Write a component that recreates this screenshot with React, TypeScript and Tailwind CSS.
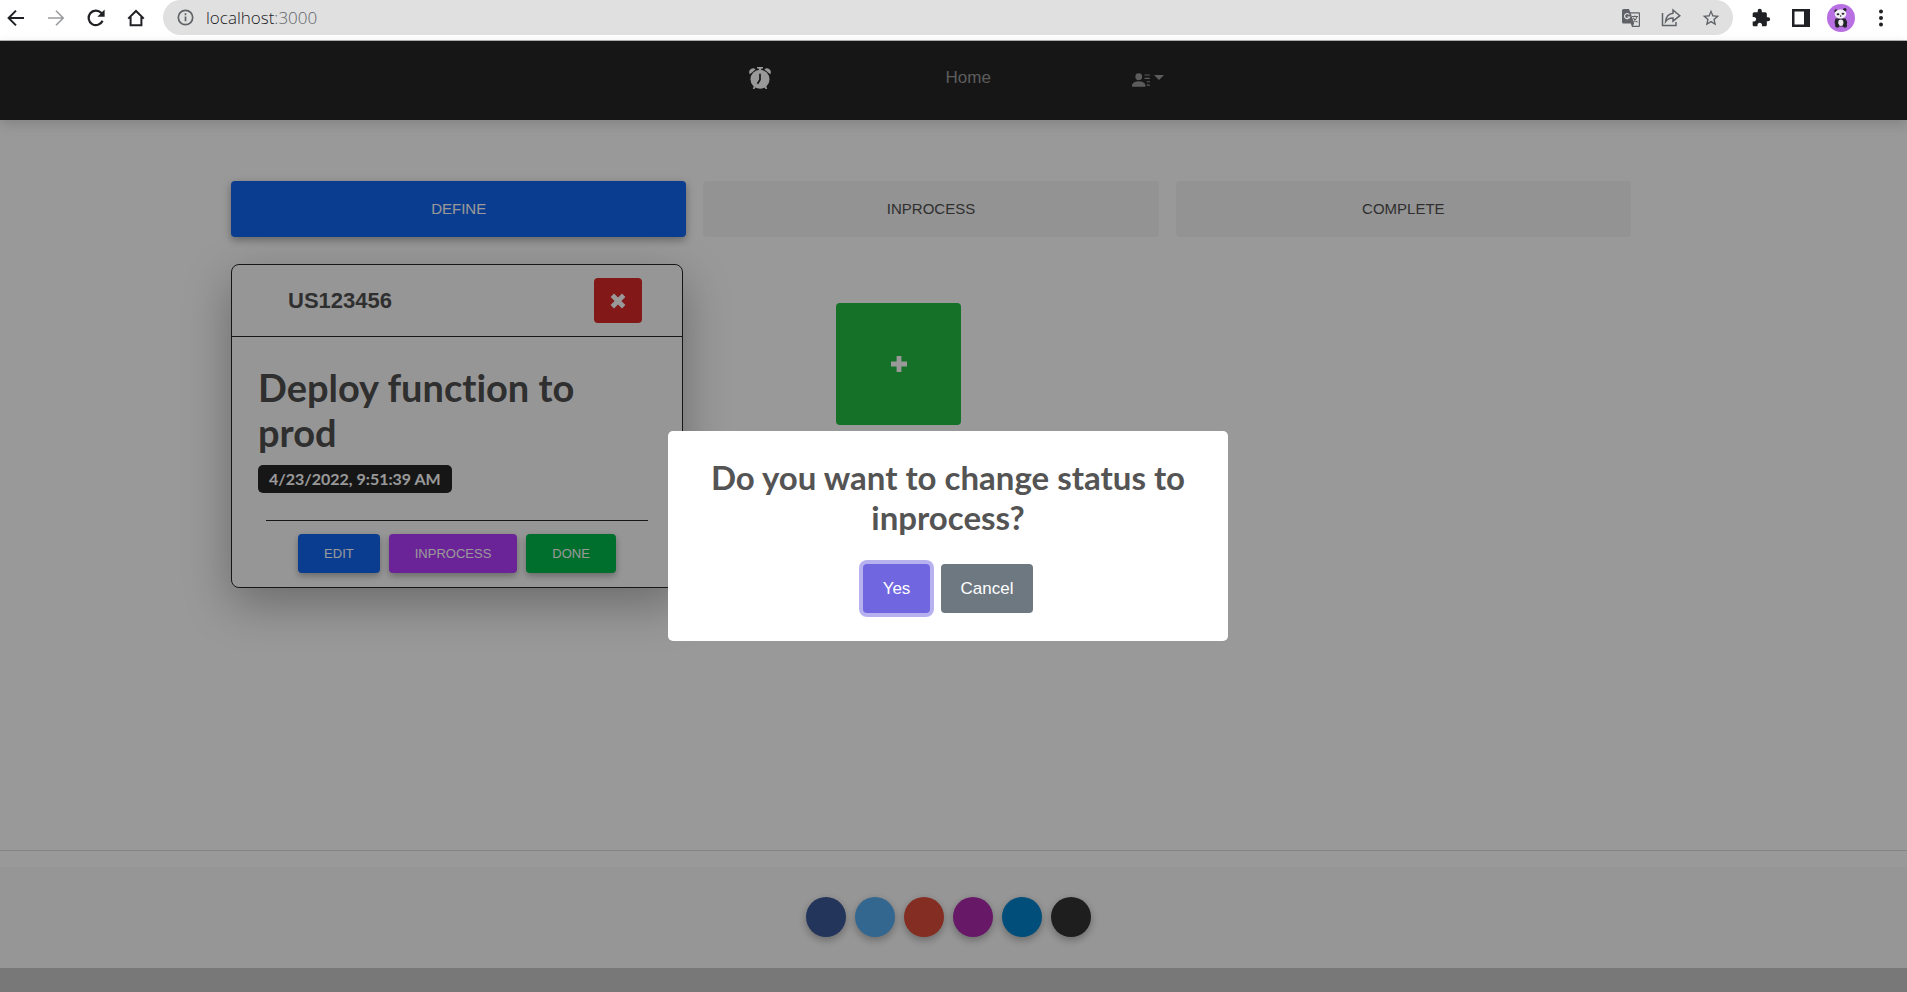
import React from "react";
import { BsPersonLinesFill } from "react-icons/bs";
import { MdExtension, MdStarBorder } from "react-icons/md";

const iconButton = "flex size-5 items-center justify-center";

function TranslateIcon() {
  return (
    <svg viewBox="0 0 20 20" className="size-5">
      <path d="M2.500 1H8l1.300 3.200H18a1 1 0 0 1 1 1V18a1 1 0 0 1-1 1h-7l-1.200-3.500H2.500A1.500 1.500 0 0 1 1 14V2.500A1.500 1.500 0 0 1 2.500 1z" fill="currentColor" />
      <path d="M9.800 5.400H17.800V17.800H12l1.200-2.300z" fill="#e0e0e0" />
      <path d="M8.300 6.600A2.600 2.600 0 1 0 8.600 9H6.300" fill="none" stroke="#e0e0e0" strokeWidth="1.200" />
      <path d="M11 8.500h6M14 7.500v1M16 8.500c-.5 2.500-2 4-3.500 5.300M12.300 9.700c.8 2 2.200 3.300 4.200 4.600" fill="none" stroke="currentColor" strokeWidth="1.100" />
    </svg>
  );
}

function PandaAvatar() {
  return (
    <svg viewBox="0 0 28 28" className="size-7">
      <circle cx="14" cy="14" r="14" fill="#b86fe2" />
      <path d="M8.500 14.500h10l1.700 3.500-.7 4.500h-11L7.500 18z" fill="#26242b" />
      <ellipse cx="13.800" cy="18.800" rx="2.600" ry="3.200" fill="#eceaee" />
      <circle cx="10.300" cy="21.800" r="2" fill="#26242b" />
      <circle cx="18" cy="21.800" r="2" fill="#26242b" />
      <circle cx="9" cy="7" r="1.700" fill="#26242b" />
      <circle cx="17.800" cy="5.800" r="1.700" fill="#26242b" />
      <ellipse cx="13.500" cy="10" rx="5.800" ry="4.500" fill="#f1f0f2" />
      <ellipse cx="11" cy="10.300" rx="1.400" ry="1" fill="#26242b" />
      <ellipse cx="16" cy="9.800" rx="1.400" ry="1" fill="#26242b" />
      <circle cx="13.600" cy="12" r=".7" fill="#26242b" />
    </svg>
  );
}

function BrowserBar() {
  return (
    <header className="flex h-[41px] items-start border-b border-[#b4b4b4] bg-white pr-4 pl-[6px] text-[#202124]">
      <div className="flex h-[35px] items-center gap-5">
        <button aria-label="Back" className={iconButton}>
          <svg viewBox="0 0 20 20" className="size-5" fill="none" stroke="currentColor" strokeWidth="2">
            <path d="M18 10H3M10 2.600 2.600 10l7.400 7.400" />
          </svg>
        </button>
        <button aria-label="Forward" className={`${iconButton} text-[#9b9c9e]`}>
          <svg viewBox="0 0 20 20" className="size-5" fill="none" stroke="currentColor" strokeWidth="1.600">
            <path d="M2 10h15M10 2.800l7.200 7.200-7.200 7.200" />
          </svg>
        </button>
        <button aria-label="Reload" className={iconButton}>
          <svg viewBox="0 0 20 20" className="size-5" fill="none" stroke="currentColor" strokeWidth="2.200">
            <path d="M16.600 12.800A7.300 7.300 0 1 1 15.200 4.800L17 6.600" />
            <path d="M18.600 1.600v7.200h-7.200z" fill="currentColor" stroke="none" />
          </svg>
        </button>
        <button aria-label="Home page" className={iconButton}>
          <svg viewBox="0 0 20 20" className="size-5" fill="none" stroke="currentColor" strokeWidth="2">
            <path d="M2.200 10.600 10 3l7.800 7.600M4.600 9v8.200h10.800V9" />
          </svg>
        </button>
      </div>
      <div className="ml-[17px] flex h-[35px] flex-1 items-center rounded-full bg-[#e0e0e0] pr-3 pl-[14px] text-[#5f6368]">
        <svg viewBox="0 0 18 18" className="size-[17px]" fill="none" stroke="currentColor" strokeWidth="1.800">
          <circle cx="9" cy="9" r="7.600" />
          <path d="M9 8v5M9 4.600v1.900" />
        </svg>
        <div role="textbox" aria-label="Address" className="ml-3 flex-1 font-['Open_Sans','Noto_Sans',sans-serif] text-[17px] leading-6 font-light">
          <span className="text-[#202124]">localhost</span>:3000
        </div>
        <div className="flex items-center gap-5">
          <button aria-label="Translate" className={iconButton}><TranslateIcon /></button>
          <button aria-label="Share" className={iconButton}>
            <svg viewBox="0 0 20 20" className="size-5" fill="none" stroke="currentColor" strokeWidth="1.500">
              <path d="M1.500 5v12.500H15V14M12 2l6.800 5.700L12 13.200V10c-3.400-.1-5.600 1-7.400 3.500C5 9.200 7.400 6 12 5.300z" />
            </svg>
          </button>
          <button aria-label="Bookmark" className={iconButton}><MdStarBorder size={22} /></button>
        </div>
      </div>
      <div className="ml-[18px] flex h-[35px] items-center gap-[14px]">
        <button aria-label="Extensions" className={iconButton}><MdExtension size={20} /></button>
        <button aria-label="Side panel" className="mr-[2px] ml-[6px] flex size-5 items-center justify-center">
          <svg viewBox="0 0 18 18" className="size-[18px]">
            <path d="M0 0h18v18H0zM2.500 2.500v13H12v-13z" fill="currentColor" fillRule="evenodd" />
          </svg>
        </button>
        <button aria-label="Profile" className="size-7"><PandaAvatar /></button>
        <button aria-label="Menu" className="ml-[2px] flex size-5 items-center justify-center">
          <svg viewBox="0 0 20 20" className="size-5" fill="currentColor">
            <circle cx="10" cy="3.500" r="2" />
            <circle cx="10" cy="10" r="2" />
            <circle cx="10" cy="16.500" r="2" />
          </svg>
        </button>
      </div>
    </header>
  );
}

function AlarmIcon() {
  return (
    <svg viewBox="0 0 22 22" className="size-[22px]">
      <g fill="currentColor">
        <path d="M8 0h6v1.200l-2 .8v1h-2V2l-2-.8zM.8 7.200A3.800 3.800 0 0 1 6.600 2.400zM21.200 7.200a3.800 3.800 0 0 0-5.800-4.800z" />
        <circle cx="11" cy="12.200" r="9.500" />
        <path d="m5 18.500 1.500 1.500-1 2H3.800zM17 18.500 15.500 20l1 2h1.700z" />
      </g>
      <path d="M11 6.800v6l-2.500 4" fill="none" stroke="#262626" strokeWidth="1.700" />
    </svg>
  );
}

function Navbar() {
  return (
    <nav className="flex h-[79px] justify-center bg-[#262626] pl-[7px] text-[#9a9a9a] shadow-[0_4px_12px_rgba(0,0,0,0.15)]">
      <div className="grid grid-cols-[197px_186px_34px] items-center pb-[6px]">
        <a href="#top" aria-label="Tasks" className="w-fit text-white"><AlarmIcon /></a>
        <a href="#home" className="text-[17px] leading-6">Home</a>
        <button aria-label="Account" className="flex items-center gap-1 pt-1">
          <BsPersonLinesFill size={18} />
          <span className="mb-1 border-x-[5px] border-t-[5px] border-x-transparent border-t-current" />
        </button>
      </div>
    </nav>
  );
}

const tabBase = "h-14 flex-1 rounded-[4px] text-[15px] leading-5 uppercase";
const actionBase = "h-[39px] rounded-[4px] px-[26px] text-[13px] leading-5 text-white uppercase shadow-[0_3px_7px_rgba(0,0,0,0.3)]";

function TaskCard() {
  return (
    <article className="w-[452px] rounded-lg border border-[#262626] bg-[#fbfbfb] text-[#4f4f4f] shadow-[0_16px_48px_rgba(0,0,0,0.3)]">
      <header className="flex h-[72px] items-center justify-between border-b border-[#262626] pr-10 pl-14">
        <h5 className="text-[22px] leading-7 font-bold">US123456</h5>
        <button aria-label="Delete task" className="flex h-[45px] w-12 items-center justify-center rounded-[4px] bg-[#db2828] text-white">
          <svg viewBox="0 0 16 16" className="size-4" fill="none" stroke="currentColor" strokeWidth="4.800">
            <path d="m2.300 2.300 11.400 11.400M13.700 2.300 2.300 13.700" />
          </svg>
        </button>
      </header>
      <div className="px-[26px] pt-7 pb-[14px]">
        <h2 className="pr-10 font-['Lato',sans-serif] text-[38px] leading-[45px] font-bold [font-variant-ligatures:none]">Deploy function to prod</h2>
        <time className="mt-[10px] flex h-7 w-fit items-center rounded-[5px] bg-[#262626] px-[11px] font-['Lato',sans-serif] text-[16px] leading-5 font-bold text-white">
          4/23/2022, 9:51:39 AM
        </time>
        <hr className="mx-2 mt-[27px] border-[#262626]" />
        <div className="mt-[13px] flex justify-center gap-[9px]">
          <button className={`${actionBase} bg-[#1266f1]`}>Edit</button>
          <button className={`${actionBase} bg-[#b23cfd]`}>Inprocess</button>
          <button className={`${actionBase} bg-[#00b74a]`}>Done</button>
        </div>
      </div>
    </article>
  );
}

const socials = [
  { name: "Facebook", color: "bg-[#3b5998]" },
  { name: "Twitter", color: "bg-[#55acee]" },
  { name: "Google", color: "bg-[#dd4b39]" },
  { name: "Instagram", color: "bg-[#ac2bac]" },
  { name: "LinkedIn", color: "bg-[#0082ca]" },
  { name: "GitHub", color: "bg-[#333333]" },
];

function Footer() {
  return (
    <footer>
      <hr className="border-[#dedede]" />
      <div className="mt-4 flex justify-center gap-[9px] bg-[#fbfbfb] pt-[30px] pr-[11px] pb-[31px]">
        {socials.map((s) => (
          <a key={s.name} href={`#${s.name}`} aria-label={s.name} className={`size-10 rounded-full shadow-[0_3px_8px_rgba(0,0,0,0.3)] ${s.color}`} />
        ))}
      </div>
      <div className="h-6 bg-[#c9c9c9]" />
    </footer>
  );
}

function StatusDialog() {
  return (
    <div className="absolute inset-0 flex items-center justify-center bg-black/40 pt-[39px] pr-[11px]">
      <section role="dialog" aria-modal="true" aria-labelledby="dialog-title" className="flex w-[560px] flex-col items-center rounded-[5px] bg-white px-7 pt-[26px] pb-7">
        <h2 id="dialog-title" className="text-center font-['Lato',sans-serif] text-[33px] leading-10 font-bold text-[#545454]">
          Do you want to change status to inprocess?
        </h2>
        <div className="mt-[27px] flex gap-[11px]">
          <button className="h-[49px] w-[67px] rounded-[4px] bg-[#7066e0] text-[17px] leading-6 font-medium text-white shadow-[0_0_0_4px_rgba(112,102,224,0.5)]">Yes</button>
          <button className="h-[49px] w-[92px] rounded-[4px] bg-[#6e7881] text-[17px] leading-6 font-medium text-white">Cancel</button>
        </div>
      </section>
    </div>
  );
}

export default function App() {
  return (
    <div className="flex min-h-screen flex-col bg-white font-['Liberation_Sans',Arial,sans-serif]">
      <BrowserBar />
      <div className="relative flex flex-1 flex-col">
        <Navbar />
        <main className="mx-auto w-full max-w-[1445px] flex-1 pt-[61px] pr-[45px]">
          <div role="tablist" className="flex gap-[17px]">
            <button role="tab" aria-selected="true" className={`${tabBase} bg-[#1266f1] text-white shadow-[0_3px_8px_rgba(0,0,0,0.35)]`}>Define</button>
            <button role="tab" aria-selected="false" className={`${tabBase} bg-[#f5f5f5] text-[#4f4f4f]`}>Inprocess</button>
            <button role="tab" aria-selected="false" className={`${tabBase} bg-[#f5f5f5] text-[#4f4f4f]`}>Complete</button>
          </div>
          <div className="mt-[27px] flex items-start gap-[153px]">
            <TaskCard />
            <button aria-label="Add task" className="mt-[39px] flex h-[122px] w-[125px] items-center justify-center rounded-[4px] bg-[#23bb43] text-white">
              <svg viewBox="0 0 16 16" className="size-4" fill="none" stroke="currentColor" strokeWidth="4.800">
                <path d="M8 0v16M0 8h16" />
              </svg>
            </button>
          </div>
        </main>
        <Footer />
        <StatusDialog />
      </div>
    </div>
  );
}
